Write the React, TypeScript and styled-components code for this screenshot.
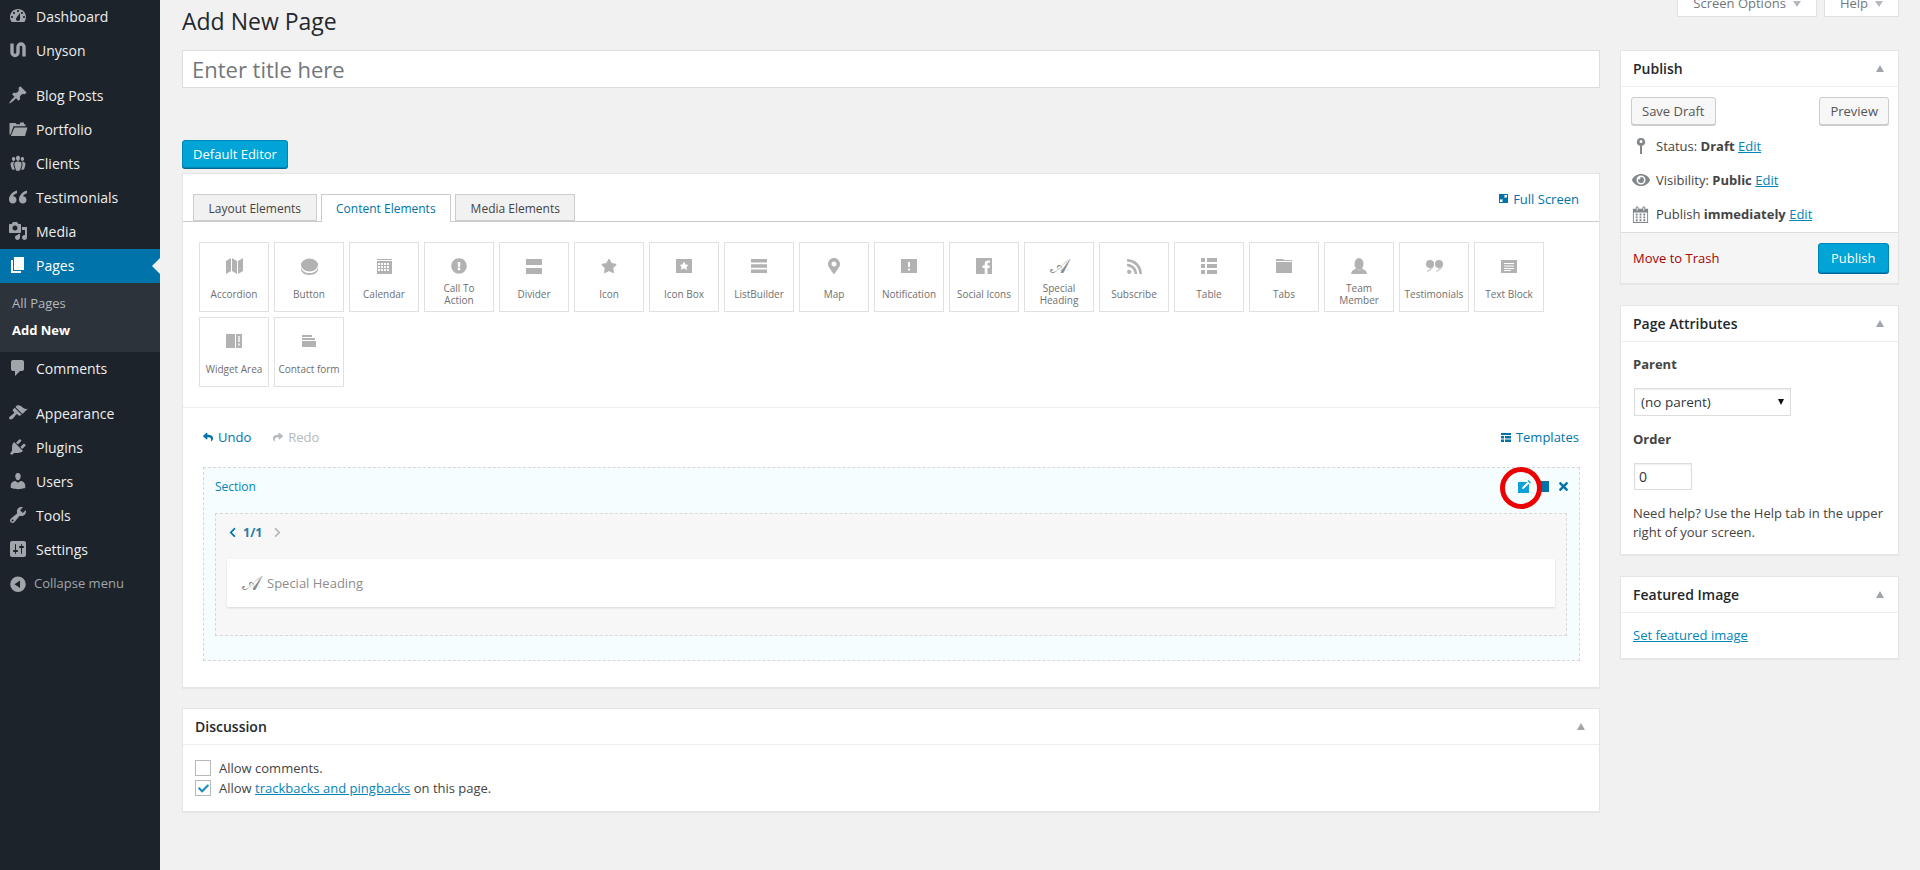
import React from "react";
import styled, { createGlobalStyle } from "styled-components";
import {
  FaExclamationCircle,
  FaMapMarkerAlt,
  FaReply,
  FaRss,
  FaShare,
  FaStar,
  FaTimes,
  FaChevronLeft,
  FaChevronRight,
  FaCheck,
  FaEye,
} from "react-icons/fa";

const GlobalStyle = createGlobalStyle`
  html, body { margin: 0; padding: 0; height: 100%; overflow: hidden; }
  body {
    background: #f1f1f1;
    color: #444;
    font-family: "Open Sans", sans-serif;
    font-size: 13px;
    line-height: 19px;
  }
  * { box-sizing: border-box; }
`;

const Shell = styled.div`
  display: grid;
  grid-template-columns: 160px 1fr;
  height: 870px;
`;

const Sidebar = styled.nav`
  background: #1c232b;
  display: flex;
  flex-direction: column;
`;

const MenuItem = styled.div<{ $active?: boolean; $gap?: boolean }>`
  position: relative;
  display: flex;
  align-items: center;
  height: 34px;
  flex: none;
  margin-top: ${(p) => (p.$gap ? "11px" : "0")};
  padding: 0 0 2px 8px;
  gap: 8px;
  font-size: 14px;
  color: ${(p) => (p.$active ? "#fff" : "#eee")};
  background: ${(p) => (p.$active ? "#0073aa" : "transparent")};
  svg { color: ${(p) => (p.$active ? "#fff" : "#a0a5aa")}; flex: none; }
  ${(p) =>
    p.$active &&
    `&::after {
      content: "";
      position: absolute;
      right: 0;
      top: 50%;
      margin-top: -8px;
      border: 8px solid transparent;
      border-right-color: #f1f1f1;
      border-left-width: 0;
    }`}
`;

const SubMenu = styled.div`
  background: #2c333b;
  height: 69px;
  flex: none;
  padding: 11px 12px 0;
  display: flex;
  flex-direction: column;
  gap: 8px;
`;

const SubItem = styled.div<{ $current?: boolean }>`
  font-size: 13px;
  color: ${(p) => (p.$current ? "#fff" : "#b4b9be")};
  font-weight: ${(p) => (p.$current ? 700 : 400)};
`;

const Collapse = styled(MenuItem)`
  color: #a0a5aa;
  font-size: 13px;
  gap: 6px;
  padding-bottom: 1px;
`;

const Main = styled.main`
  padding: 0 20px 0 22px;
  min-width: 0;
`;

const ScreenTabs = styled.div`
  display: flex;
  justify-content: flex-end;
  gap: 7px;
  height: 0;
  margin-right: 1px;
`;

const ScreenTab = styled.div`
  height: 17px;
  background: #fff;
  border: 1px solid #e1e1e1;
  border-top: 0;
  display: flex;
  align-items: flex-end;
  gap: 7px;
  padding: 0 15px 3px;
  color: #72777c;
  font-size: 13px;
  line-height: 19px;
  overflow: hidden;
`;

const Caret = styled.i<{ $up?: boolean }>`
  display: inline-block;
  width: 0;
  height: 0;
  border-left: 4px solid transparent;
  border-right: 4px solid transparent;
  ${(p) =>
    p.$up
      ? "border-bottom: 7px solid #a0a5aa;"
      : "border-top: 6px solid #b4b9be; margin-bottom: 6px;"}
`;

const Heading = styled.h1`
  margin: 0;
  padding-top: 7px;
  height: 50px;
  font-size: 23px;
  font-weight: 400;
  line-height: 29px;
  color: #23282d;
`;

const Columns = styled.div`
  display: grid;
  grid-template-columns: 1418px 279px;
  column-gap: 20px;
  align-items: start;
`;

const TitleInput = styled.input`
  display: block;
  width: 100%;
  height: 38px;
  padding: 3px 9px;
  border: 1px solid #ddd;
  background: #fff;
  font-family: inherit;
  font-size: 22px;
  outline: 0;
  &::placeholder { color: #72777c; opacity: 1; }
`;

const Button = styled.button<{ $primary?: boolean; $h?: number }>`
  height: ${(p) => p.$h ?? 28}px;
  padding: 0 ${(p) => (p.$primary ? 12.5 : 10)}px;
  border: 1px solid ${(p) => (p.$primary ? "#0087b8" : "#ccc")};
  border-radius: 3px;
  background: ${(p) => (p.$primary ? "#00a4d6" : "#f7f7f7")};
  color: ${(p) => (p.$primary ? "#fff" : "#555")};
  box-shadow: 0 1px 0 ${(p) => (p.$primary ? "#006799" : "#ccc")};
  font-family: inherit;
  font-size: 13px;
  line-height: 1;
`;

const EditorButton = styled(Button)`
  display: block;
  margin: 52px 0 5px;
  width: 106px;
  padding: 0;
`;

const Panel = styled.section`
  background: #fff;
  border: 1px solid #e5e5e5;
  box-shadow: 0 1px 1px rgba(0, 0, 0, 0.04);
`;

const TabBar = styled.div`
  height: 48px;
  padding: 20px 20px 0 10px;
  display: flex;
  border-bottom: 1px solid #ccc;
`;

const Tab = styled.div<{ $active?: boolean }>`
  height: ${(p) => (p.$active ? 28 : 27)}px;
  margin-right: 4px;
  padding: 0 14.5px;
  font-size: 12px;
  line-height: 28px;
  border: 1px solid #ccc;
  border-bottom: ${(p) => (p.$active ? "0" : "1px solid #ccc")};
  background: ${(p) => (p.$active ? "#fff" : "#f1f1f1")};
  color: ${(p) => (p.$active ? "#0073aa" : "#444")};
`;

const ToolLink = styled.a<{ $muted?: boolean }>`
  display: inline-flex;
  align-items: center;
  gap: 5px;
  color: ${(p) => (p.$muted ? "#b4b9be" : "#0073aa")};
  font-size: 13px;
  line-height: 20px;
`;

const FullScreen = styled(ToolLink)`
  margin-left: auto;
  height: 19px;
  margin-top: -5px;
`;

const Thumbs = styled.div`
  display: flex;
  flex-wrap: wrap;
  gap: 5px;
  padding: 20px 16px 20px;
  border-bottom: 1px solid #eee;
`;

const Thumb = styled.div`
  width: 70px;
  height: 70px;
  border: 1px solid #e1e1e1;
  display: flex;
  flex-direction: column;
  align-items: center;
  padding-top: 11px;
  color: #b2b2b2;
`;

const ThumbIcon = styled.div`
  height: 24px;
  display: flex;
  align-items: center;
  justify-content: center;
`;

const ThumbLabel = styled.div`
  height: 24px;
  margin-top: 4px;
  display: flex;
  align-items: center;
  text-align: center;
  font-size: 10px;
  line-height: 12px;
  color: #6f6f6f;
  white-space: pre-line;
`;

const ScriptGlyph = styled.span<{ $size: number }>`
  font-family: "DejaVu Sans", "DejaVu Serif", "Liberation Serif", serif;
  font-size: ${(p) => p.$size}px;
  line-height: 1;
  color: #888;
`;

const Builder = styled.div`
  padding: 19px 19px 26px 20px;
`;

const BuilderTools = styled.div`
  display: flex;
  justify-content: space-between;
  height: 20px;
  margin: 0 1px 20px 0;
`;

const Undo = styled.div`
  display: flex;
  gap: 22px;
`;

const SectionBox = styled.div`
  position: relative;
  height: 194px;
  padding: 0 12px 0 11px;
  background: #f5fdff;
  border: 1px dashed #d8d8d8;
`;

const SectionHead = styled.div`
  height: 45px;
  display: flex;
  align-items: center;
  justify-content: space-between;
  padding-bottom: 9px;
  color: #0085ba;
  font-size: 12px;
`;

const SectionActions = styled.div`
  display: flex;
  align-items: center;
  gap: 8px;
  margin-right: -3px;
  color: #0073aa;
`;

const RedRing = styled.span`
  position: absolute;
  top: -1px;
  right: 37px;
  width: 42px;
  height: 42px;
  border: 5px solid #ec0000;
  border-radius: 50%;
`;

const ColumnBox = styled.div`
  height: 123px;
  padding: 0 11px;
  background: #f7f7f7;
  border: 1px dashed #d8d8d8;
`;

const Pager = styled.div`
  height: 45px;
  padding-bottom: 8px;
  display: flex;
  align-items: center;
  gap: 5px;
  font-size: 12.5px;
  font-weight: 700;
  color: #2a7ba6;
`;

const NextIcon = styled(FaChevronRight)`
  margin-left: 5px;
  color: #b4b9be;
`;

const Card = styled.div`
  height: 48px;
  background: #fff;
  box-shadow: 0 1px 2px rgba(0, 0, 0, 0.12);
  display: flex;
  align-items: center;
  gap: 6px;
  padding-left: 15px;
  color: #8c8c8c;
  font-size: 13px;
`;

const Box = styled(Panel)`
  margin-top: 20px;
`;

const SideBox = styled(Panel)<{ $first?: boolean }>`
  margin-top: ${(p) => (p.$first ? 0 : 21)}px;
`;

const BoxHead = styled.header`
  height: 36px;
  padding: 0 14px 0 12px;
  display: flex;
  align-items: center;
  justify-content: space-between;
  border-bottom: 1px solid #eee;
  font-size: 14px;
  font-weight: 600;
  color: #23282d;
`;

const BoxBody = styled.div`
  padding: 13px 12px 13px;
`;

const CheckRow = styled.label`
  display: flex;
  align-items: center;
  gap: 8px;
  height: 20px;
  font-size: 13px;
`;

const CheckBox = styled.span`
  width: 16px;
  height: 16px;
  display: flex;
  align-items: center;
  justify-content: center;
  border: 1px solid #b4b9be;
  background: #fff;
  color: #1e8cbe;
`;

const Link = styled.a`
  color: #0085ba;
  text-decoration: underline;
`;

const PublishActions = styled.div`
  display: flex;
  justify-content: space-between;
  padding: 10px 9px 0 10px;
`;

const Misc = styled.div`
  height: 107px;
  padding-top: 4px;
`;

const MiscRow = styled.div`
  height: 34px;
  display: flex;
  align-items: center;
  gap: 6px;
  padding-left: 10px;
  font-size: 13px;
  color: #444;
  svg { color: #82878c; flex: none; }
  b { font-weight: 700; }
`;

const MiscIcon = styled.span`
  width: 19px;
  display: flex;
  justify-content: center;
`;

const PublishFoot = styled.div`
  height: 51px;
  padding: 10px 9px 0 12px;
  background: #f5f5f5;
  border-top: 1px solid #ddd;
  display: flex;
  justify-content: space-between;
  align-items: flex-start;
`;

const Trash = styled.span`
  font-size: 13px;
  line-height: 30px;
  color: #a00;
`;

const AttrBody = styled.div`
  padding: 13px 12px 12px;
  display: flex;
  flex-direction: column;
  align-items: flex-start;
`;

const AttrLabel = styled.div`
  font-weight: 700;
  height: 19px;
  margin-bottom: 14px;
`;

const SelectWrap = styled.div`
  position: relative;
  margin: 0 0 14px 1px;
  &::after {
    content: "";
    position: absolute;
    top: 11px;
    right: 7px;
    border-left: 3.5px solid transparent;
    border-right: 3.5px solid transparent;
    border-top: 6px solid #111;
  }
`;

const AttrSelect = styled.select`
  display: block;
  width: 157px;
  height: 28px;
  padding: 0 6px;
  appearance: none;
  border: 1px solid #ddd;
  border-radius: 0;
  background: #fff;
  color: #32373c;
  font-family: inherit;
  font-size: 13.5px;
  box-shadow: inset 0 1px 2px rgba(0, 0, 0, 0.07);
`;

const AttrInput = styled.input`
  width: 58px;
  height: 27px;
  margin-left: 1px;
  margin-bottom: 14px;
  padding: 3px 4px;
  border: 1px solid #ddd;
  background: #fff;
  color: #32373c;
  font-family: inherit;
  font-size: 14px;
  box-shadow: inset 0 1px 2px rgba(0, 0, 0, 0.07);
`;

const Help = styled.div`
  font-size: 13px;
  line-height: 19px;
`;

const FeaturedBody = styled.div`
  padding: 13px 12px 13px;
`;

// dashicons-style wp menu glyphs, 20x20
const Dash = ({ d, size = 20 }: { d: string; size?: number }) => (
  <svg width={size} height={size} viewBox="0 0 20 20" fill="currentColor">
    <path d={d} />
  </svg>
);

const Draw = ({ children, size = 16, w }: { children: React.ReactNode; size?: number; w?: number }) => (
  <svg width={w ?? size} height={size} viewBox={`0 0 ${w ?? size} ${size}`} fill="currentColor">
    {children}
  </svg>
);

const D = {
  dashboard:
    "M3.76 16h12.48c1.1-1.37 1.76-3.11 1.76-5 0-4.42-3.58-8-8-8s-8 3.58-8 8c0 1.89.66 3.63 1.76 5zM10 4c.55 0 1 .45 1 1s-.45 1-1 1-1-.45-1-1 .45-1 1-1zM6 6c.55 0 1 .45 1 1s-.45 1-1 1-1-.45-1-1 .45-1 1-1zm8 0c.55 0 1 .45 1 1s-.45 1-1 1-1-.45-1-1 .45-1 1-1zm-5.37 5.55L12 7v6c0 1.1-.9 2-2 2s-2-.9-2-2c0-.57.24-1.08.63-1.45zM4 10c.55 0 1 .45 1 1s-.45 1-1 1-1-.45-1-1 .45-1 1-1zm12 0c.55 0 1 .45 1 1s-.45 1-1 1-1-.45-1-1 .45-1 1-1z",
  post:
    "M10.44 3.02l1.82-1.82 6.36 6.35-1.83 1.82c-1.05-.68-2.48-.57-3.41.36l-.75.75c-.92.93-1.04 2.35-.35 3.41l-1.83 1.82-2.41-2.41-2.8 2.79c-.42.42-3.38 2.71-3.8 2.29s1.86-3.39 2.28-3.81l2.79-2.79L4.1 9.36l1.83-1.82c1.05.69 2.48.57 3.4-.36l.75-.75c.93-.92 1.05-2.35.36-3.41z",
  portfolio:
    "M1.500 4h6l1 1.300h3.500V3.500h4v1.800h1.500v2H5.500L2.500 15.500H1.500zM6.500 8.500h13L17 17H2.800z",
  groups:
    "M8.03 4.46c-.29 1.28.55 3.46 1.97 3.46 1.41 0 2.25-2.18 1.96-3.46-.22-.98-1.08-1.63-1.96-1.63-.89 0-1.74.65-1.97 1.63zm-4.13.9c-.25 1.08.47 2.93 1.67 2.93s1.92-1.85 1.67-2.93c-.19-.83-.92-1.39-1.67-1.39s-1.48.56-1.67 1.39zm8.86 0c-.25 1.08.47 2.93 1.66 2.93 1.2 0 1.92-1.85 1.67-2.93-.19-.83-.92-1.39-1.67-1.39-.74 0-1.47.56-1.66 1.39zm-.59 11.43l1.25-4.3C14.2 10 12.71 8.47 10 8.47c-2.72 0-4.21 1.53-3.44 4.02l1.26 4.3C8.05 17.51 9 18 10 18c.98 0 1.94-.49 2.17-1.21zm-6.1-7.63c-.49.67-.96 1.83-.42 3.59l1.12 3.79c-.34.2-.77.31-1.2.31-.85 0-1.65-.41-1.85-1.03l-1.07-3.65c-.65-2.11.61-3.4 2.92-3.4.27 0 .54.02.79.06-.1.1-.2.22-.29.33zm8.35-.39c2.31 0 3.58 1.29 2.92 3.4l-1.07 3.65c-.2.62-1 1.03-1.85 1.03-.43 0-.86-.11-1.2-.31l1.11-3.77c.55-1.78.08-2.94-.42-3.61-.08-.11-.18-.23-.28-.33.25-.04.51-.06.79-.06z",
  quote:
    "M9 3.500C4.500 4.800 1 8.300 1 12.700c0 2.200 1.700 3.800 3.800 3.800s3.700-1.600 3.700-3.600-1.500-3.500-3.500-3.600C5.500 7.800 7 6.800 9 6.200zM19 3.500c-4.500 1.300-8 4.800-8 9.200 0 2.200 1.700 3.800 3.800 3.800s3.700-1.600 3.700-3.600-1.500-3.500-3.500-3.600c.5-1.500 2-2.500 4-3.100z",
  media:
    "M13 11V4c0-.55-.45-1-1-1h-1.67L9 1H5L3.67 3H2c-.55 0-1 .45-1 1v7c0 .55.45 1 1 1h10c.55 0 1-.45 1-1zM7 4.500c1.380 0 2.500 1.120 2.500 2.500S8.380 9.500 7 9.500 4.500 8.380 4.500 7 5.620 4.500 7 4.500zM14 6h5v10.500c0 1.380-1.120 2.500-2.500 2.500S14 17.880 14 16.500s1.120-2.500 2.500-2.500c.17 0 .34.02.5.05V9h-3V6zm-4 8.050V13h2v3.500c0 1.380-1.120 2.500-2.500 2.500S7 17.880 7 16.500 8.120 14 9.500 14c.17 0 .34.02.5.05z",
  page: "M6 15V2h10v13H6zm-1 1h8v2H3V5h2v11z",
  comments:
    "M5 2h9c1.100 0 2 .9 2 2v7c0 1.100-.9 2-2 2h-2l-5 5v-5H5c-1.100 0-2-.9-2-2V4c0-1.100.9-2 2-2z",
  appearance:
    "M14.480 11.060L7.410 3.990l1.500-1.500c.5-.56 2.300-.47 3.510.32 1.210.8 1.430 1.280 2.910 2.100 1.180.64 2.450 1.260 4.450.85zm-.71.71L6.700 4.700 4.930 6.470c-.39.39-.39 1.020 0 1.410l1.060 1.060c.39.39.39 1.030 0 1.420-.6.6-1.430 1.110-2.210 1.690-.35.26-.7.53-1.010.84C1.430 13.230.4 14.910 1.500 16c1.100 1.100 2.780.07 4.140-1.270.31-.31.58-.66.84-1.010.58-.78 1.090-1.610 1.690-2.210.39-.39 1.030-.39 1.420 0l1.060 1.060c.39.39 1.020.39 1.410 0z",
  plugins:
    "M13.110 4.360L9.870 7.600 8 5.730l3.240-3.240c.35-.34 1.050-.2 1.560.32.52.51.66 1.210.31 1.550zm-8 1.770l.91-1.120 9.010 9.010-1.190.84c-.71.71-2.630 1.160-3.820 1.160H6.140L4.900 17.260c-.59.59-1.540.59-2.120 0-.59-.58-.59-1.530 0-2.120l1.240-1.240v-3.880c0-1.130.4-3.190 1.090-3.890zm7.260 3.970l3.240-3.240c.34-.35 1.040-.21 1.550.31.52.51.66 1.210.31 1.550l-3.240 3.250z",
  users:
    "M10 9.250c-2.270 0-2.730-3.440-2.730-3.440C7 4.020 7.820 2 9.970 2c2.160 0 2.980 2.020 2.710 3.810 0 0-.41 3.440-2.680 3.440zm0 2.570L12.720 10c2.390 0 4.520 2.330 4.520 4.530v2.490s-3.650 1.130-7.240 1.130c-3.650 0-7.240-1.130-7.240-1.130v-2.490c0-2.250 1.940-4.480 4.470-4.480z",
  tools:
    "M16.680 9.770c-1.340 1.340-3.300 1.670-4.950.99l-5.410 6.520c-.99.99-2.590.99-3.580 0s-.99-2.590 0-3.570l6.520-5.420c-.68-1.650-.35-3.610.99-4.950 1.280-1.280 3.120-1.620 4.720-1.060l-2.890 2.890 2.820 2.820 2.860-2.870c.53 1.580.18 3.390-1.080 4.650zM3.810 16.210c.4.39 1.040.39 1.430 0 .4-.4.4-1.040 0-1.430-.39-.4-1.030-.4-1.430 0-.39.39-.39 1.030 0 1.430z",
  settings:
    "M18 16V4c0-1.100-.9-2-2-2H4c-1.100 0-2 .9-2 2v12c0 1.100.9 2 2 2h12c1.100 0 2-.9 2-2zM8 11h1c.55 0 1 .45 1 1s-.45 1-1 1H8v1.500c0 .28-.22.5-.5.5s-.5-.22-.5-.5V13H6c-.55 0-1-.45-1-1s.45-1 1-1h1V5.500c0-.28.22-.5.5-.5s.5.22.5.5V11zm5-2h-1c-.55 0-1-.45-1-1s.45-1 1-1h1V5.500c0-.28.22-.5.5-.5s.5.22.5.5V7h1c.55 0 1 .45 1 1s-.45 1-1 1h-1v5.500c0 .28-.22.5-.5.5s-.5-.22-.5-.5V9z",
  collapse:
    "M10 2.500a7.800 7.800 0 1 1 0 15.600 7.800 7.800 0 0 1 0-15.600zM12 6.500l-5.500 3.800 5.500 3.800z",
  calendar:
    "M15 4h3v15H2V4h3V3c0-.41.15-.76.44-1.060.29-.29.65-.44 1.060-.44s.77.15 1.060.44c.29.3.44.65.44 1.060v1h4V3c0-.41.15-.76.44-1.060.29-.29.65-.44 1.060-.44s.77.15 1.060.44c.29.3.44.65.44 1.060v1zM6 3v2.500c0 .14.05.26.15.36.09.09.21.14.35.14s.26-.05.35-.14c.1-.1.15-.22.15-.36V3c0-.14-.05-.26-.15-.35-.09-.1-.21-.15-.35-.15s-.26.05-.35.15c-.1.09-.15.21-.15.35zm7 0v2.500c0 .14.05.26.14.36.1.09.22.14.36.14s.26-.05.36-.14c.09-.1.14-.22.14-.36V3c0-.14-.05-.26-.14-.35-.1-.1-.22-.15-.36-.15s-.26.05-.36.15c-.09.09-.14.21-.14.35zm4 15V8H3v10h14zM7 9v2H5V9h2zm2 0h2v2H9V9zm4 2V9h2v2h-2zm-6 1v2H5v-2h2zm2 0h2v2H9v-2zm4 2v-2h2v2h-2zm-6 1v2H5v-2h2zm4 2H9v-2h2v2zm4 0h-2v-2h2v2z",
};

const UnysonIcon = () => (
  <svg width="20" height="20" viewBox="0 0 20 20" fill="none" stroke="currentColor" strokeWidth="3.4">
    <path d="M4 3.500v9a3 3 0 0 0 6 0V7a3 3 0 0 1 6 0v9.500" />
  </svg>
);

const menuTop: { label: string; icon: React.ReactNode; gap?: boolean; active?: boolean }[] = [
  { label: "Dashboard", icon: <Dash d={D.dashboard} /> },
  { label: "Unyson", icon: <UnysonIcon /> },
  { label: "Blog Posts", icon: <Dash d={D.post} />, gap: true },
  { label: "Portfolio", icon: <Dash d={D.portfolio} /> },
  { label: "Clients", icon: <Dash d={D.groups} /> },
  { label: "Testimonials", icon: <Dash d={D.quote} /> },
  { label: "Media", icon: <Dash d={D.media} /> },
  { label: "Pages", icon: <Dash d={D.page} />, active: true },
];

const menuBottom = [
  { label: "Appearance", icon: D.appearance, gap: true },
  { label: "Plugins", icon: D.plugins },
  { label: "Users", icon: D.users },
  { label: "Tools", icon: D.tools },
  { label: "Settings", icon: D.settings },
];

const thumbs: { label: string; icon: React.ReactNode }[] = [
  {
    label: "Accordion",
    icon: (
      <Draw size={16} w={17}>
        <path d="M0 3l5-3v13l-5 3zM6 0l5 3v13l-5-3zM12 3l5-3v13l-5 3z" />
      </Draw>
    ),
  },
  {
    label: "Button",
    icon: (
      <Draw size={17} w={17}>
        <ellipse cx="8.500" cy="7" rx="8.500" ry="6.500" />
        <path d="M0 9c1 4 4 6 8.500 6s7.500-2 8.500-6v2c0 3-3 6-8.500 6S0 14 0 11z" />
      </Draw>
    ),
  },
  {
    label: "Calendar",
    icon: (
      <Draw size={15} w={15}>
        <path d="M0 0h15v1H0zM0 2h15v13H0z" />
        <path
          fill="#fff"
          d="M1 4h2v2H1zM4 4h2v2H4zM7 4h2v2H7zM10 4h2v2h-2zM1 7h2v2H1zM4 7h2v2H4zM7 7h2v2H7zM10 7h2v2h-2zM1 10h2v2H1zM4 10h2v2H4zM7 10h2v2H7zM10 10h2v2h-2z"
        />
      </Draw>
    ),
  },
  { label: "Call To\nAction", icon: <FaExclamationCircle size={16} /> },
  {
    label: "Divider",
    icon: (
      <Draw size={15} w={16}>
        <path d="M0 0h16v6H0zM0 9h16v6H0z" />
      </Draw>
    ),
  },
  { label: "Icon", icon: <FaStar size={16} /> },
  {
    label: "Icon Box",
    icon: (
      <Draw size={14} w={16}>
        <path d="M0 0h16v14H0z" />
        <path fill="#fff" d="M8 2.500l1.600 2.900 3 .5-2.200 2.200.6 3.100L8 9.300l-3 1.400.6-3.100L3.400 5.900l3-.5z" />
      </Draw>
    ),
  },
  {
    label: "ListBuilder",
    icon: (
      <Draw size={14} w={16}>
        <path d="M0 0h16v3.500H0zM0 5.300h16v3.500H0zM0 10.500h16V14H0z" />
      </Draw>
    ),
  },
  { label: "Map", icon: <FaMapMarkerAlt size={16} /> },
  {
    label: "Notification",
    icon: (
      <Draw size={14} w={16}>
        <path fillRule="evenodd" d="M0 0h16v14H0zM7 3v5h2V3zM7 9.500v2h2v-2z" />
      </Draw>
    ),
  },
  {
    label: "Social Icons",
    icon: (
      <Draw size={16} w={16}>
        <path d="M0 0h16v16h-4.500v-6h2l.4-2.500h-2.400V6c0-.8.3-1.200 1.200-1.200H14V2.600c-.4 0-1.200-.1-2-.1-2 0-3.300 1.200-3.300 3.300v1.700H6.500V10h2.200v6H0z" />
      </Draw>
    ),
  },
  { label: "Special\nHeading", icon: <ScriptGlyph $size={20}>𝒜</ScriptGlyph> },
  { label: "Subscribe", icon: <FaRss size={17} /> },
  {
    label: "Table",
    icon: (
      <Draw size={16} w={16}>
        <path d="M0 0h4v4H0zM6 0h10v4H6zM0 6h4v4H0zM6 6h10v4H6zM0 12h4v4H0zM6 12h10v4H6z" />
      </Draw>
    ),
  },
  {
    label: "Tabs",
    icon: (
      <Draw size={14} w={16}>
        <path d="M0 0h7l1 1h8v1H0zM0 3h16v11H0z" />
      </Draw>
    ),
  },
  {
    label: "Team\nMember",
    icon: (
      <Draw size={16} w={16}>
        <ellipse cx="8" cy="6" rx="4.500" ry="6" />
        <path d="M5 10.500L1 13l-1 3h16l-1-3-4-2.500-3 2z" />
      </Draw>
    ),
  },
  {
    label: "Testimonials",
    icon: (
      <Draw size={12} w={17}>
        <circle cx="4" cy="4" r="4" />
        <circle cx="13" cy="4" r="4" />
        <path opacity=".6" d="M8 4c0 4-3 7-7 8l-.3-1C3 10 5 7 5 5zM17 4c0 4-3 7-7 8l-.3-1c2.300-1 4.300-4 4.300-6z" />
      </Draw>
    ),
  },
  {
    label: "Text Block",
    icon: (
      <Draw size={13} w={16}>
        <path fillRule="evenodd" d="M0 0h16v13H0zM3 3v1h10V3zM3 5.500v1h10v-1zM3 8v1h10V8zM3 10v1h7v-1z" />
      </Draw>
    ),
  },
  {
    label: "Widget Area",
    icon: (
      <Draw size={14} w={16}>
        <path fillRule="evenodd" d="M0 0h9v14H0zM10 0h6v14h-6zM12.300 2v6h1.400V2zM12.300 9.500v2h1.400v-2z" />
      </Draw>
    ),
  },
  {
    label: "Contact form",
    icon: (
      <Draw size={12} w={14}>
        <path d="M0 0h10v2H0zM0 3h13v2H0zM0 6h14v6H0z" />
      </Draw>
    ),
  },
];

const MetaBox = ({ title, first, children }: { title: string; first?: boolean; children: React.ReactNode }) => (
  <SideBox $first={first}>
    <BoxHead>
      {title}
      <Caret $up />
    </BoxHead>
    {children}
  </SideBox>
);

const App = () => (
  <>
    <GlobalStyle />
    <Shell>
      <Sidebar>
        {menuTop.map((m) => (
          <MenuItem key={m.label} $gap={m.gap} $active={m.active}>
            {m.icon}
            {m.label}
          </MenuItem>
        ))}
        <SubMenu>
          <SubItem>All Pages</SubItem>
          <SubItem $current>Add New</SubItem>
        </SubMenu>
        <MenuItem>
          <Dash d={D.comments} />
          Comments
        </MenuItem>
        {menuBottom.map((m) => (
          <MenuItem key={m.label} $gap={m.gap}>
            <Dash d={m.icon} />
            {m.label}
          </MenuItem>
        ))}
        <Collapse>
          <Dash d={D.collapse} />
          Collapse menu
        </Collapse>
      </Sidebar>

      <Main>
        <ScreenTabs>
          <ScreenTab>
            Screen Options <Caret />
          </ScreenTab>
          <ScreenTab>
            Help <Caret />
          </ScreenTab>
        </ScreenTabs>
        <Heading>Add New Page</Heading>
        <Columns>
          <div>
            <TitleInput placeholder="Enter title here" />
            <EditorButton $primary>Default Editor</EditorButton>
            <Panel>
              <TabBar>
                <Tab>Layout Elements</Tab>
                <Tab $active>Content Elements</Tab>
                <Tab>Media Elements</Tab>
                <FullScreen>
                  <Draw size={9} w={9}>
                    <path fillRule="evenodd" d="M0 0h9v9H0zM1 5v3h3L3 7l1-1-1-1-1 1zM8 4V1H5l1 1-1 1 1 1 1-1z" />
                  </Draw>
                  Full Screen
                </FullScreen>
              </TabBar>
              <Thumbs>
                {thumbs.map((t) => (
                  <Thumb key={t.label}>
                    <ThumbIcon>{t.icon}</ThumbIcon>
                    <ThumbLabel>{t.label}</ThumbLabel>
                  </Thumb>
                ))}
              </Thumbs>
              <Builder>
                <BuilderTools>
                  <Undo>
                    <ToolLink>
                      <FaReply size={10} />
                      Undo
                    </ToolLink>
                    <ToolLink $muted>
                      <FaShare size={10} />
                      Redo
                    </ToolLink>
                  </Undo>
                  <ToolLink>
                    <Draw size={9} w={10}>
                      <path d="M0 0h10v2H0zM0 3h3v2.500H0zM4 3h6v2.500H4zM0 6.500h3V9H0zM4 6.500h6V9H4z" />
                    </Draw>
                    Templates
                  </ToolLink>
                </BuilderTools>
                <SectionBox>
                  <SectionHead>
                    Section
                    <SectionActions>
                      <Draw size={13} w={13}>
                        <path fill="#0ea0d6" d="M0 2h11v11H0z" />
                        <path fill="#fff" d="M4 9l.5-2L10.500 1l1.500 1.500L6 8.500z" />
                        <path fill="#0ea0d6" d="M10.500 0L13 2.500 12 3.500 9.500 1z" />
                      </Draw>
                      <Draw size={11} w={10}>
                        <path d="M0 0h10v11H3L0 9z" />
                      </Draw>
                      <FaTimes size={13} />
                    </SectionActions>
                  </SectionHead>
                  <RedRing />
                  <ColumnBox>
                    <Pager>
                      <FaChevronLeft size={11} color="#0073aa" />
                      1/1
                      <NextIcon size={11} />
                    </Pager>
                    <Card>
                      <ScriptGlyph $size={20}>𝒜</ScriptGlyph>
                      Special Heading
                    </Card>
                  </ColumnBox>
                </SectionBox>
              </Builder>
            </Panel>
            <Box>
              <BoxHead>
                Discussion
                <Caret $up />
              </BoxHead>
              <BoxBody>
                <CheckRow>
                  <CheckBox />
                  Allow comments.
                </CheckRow>
                <CheckRow>
                  <CheckBox>
                    <FaCheck size={11} />
                  </CheckBox>
                  <span>
                    Allow <Link>trackbacks and pingbacks</Link> on this page.
                  </span>
                </CheckRow>
              </BoxBody>
            </Box>
          </div>

          <aside>
            <MetaBox title="Publish" first>
              <PublishActions>
                <Button>Save Draft</Button>
                <Button>Preview</Button>
              </PublishActions>
              <Misc>
                <MiscRow>
                  <MiscIcon>
                    <Draw size={16} w={10}>
                      <path
                        fillRule="evenodd"
                        d="M5 0a4 4 0 0 1 1 7.900V16H4V7.900A4 4 0 0 1 5 0zM5 2a1.500 1.500 0 1 0 0 3 1.500 1.500 0 0 0 0-3z"
                      />
                    </Draw>
                  </MiscIcon>
                  <span>
                    Status: <b>Draft</b> <Link>Edit</Link>
                  </span>
                </MiscRow>
                <MiscRow>
                  <MiscIcon>
                    <FaEye size={18} />
                  </MiscIcon>
                  <span>
                    Visibility: <b>Public</b> <Link>Edit</Link>
                  </span>
                </MiscRow>
                <MiscRow>
                  <MiscIcon>
                    <Dash d={D.calendar} size={19} />
                  </MiscIcon>
                  <span>
                    Publish <b>immediately</b> <Link>Edit</Link>
                  </span>
                </MiscRow>
              </Misc>
              <PublishFoot>
                <Trash>Move to Trash</Trash>
                <Button $primary $h={30}>
                  Publish
                </Button>
              </PublishFoot>
            </MetaBox>
            <MetaBox title="Page Attributes">
              <AttrBody>
                <AttrLabel>Parent</AttrLabel>
                <SelectWrap>
                  <AttrSelect defaultValue="none">
                    <option value="none">(no parent)</option>
                  </AttrSelect>
                </SelectWrap>
                <AttrLabel>Order</AttrLabel>
                <AttrInput defaultValue="0" />
                <Help>
                  Need help? Use the Help tab in the upper
                  <br />
                  right of your screen.
                </Help>
              </AttrBody>
            </MetaBox>
            <MetaBox title="Featured Image">
              <FeaturedBody>
                <Link>Set featured image</Link>
              </FeaturedBody>
            </MetaBox>
          </aside>
        </Columns>
      </Main>
    </Shell>
  </>
);

export default App;
